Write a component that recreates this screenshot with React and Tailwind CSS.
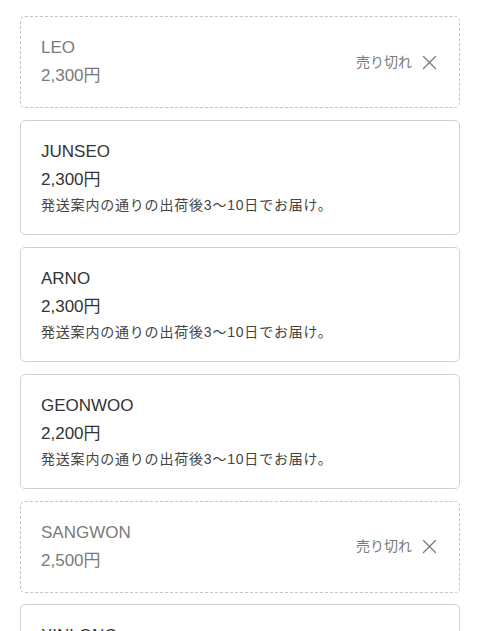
const items = [
    { name: "LEO", price: "2,300円", soldOut: true },
    { name: "JUNSEO", price: "2,300円" },
    { name: "ARNO", price: "2,300円" },
    { name: "GEONWOO", price: "2,200円" },
    { name: "SANGWON", price: "2,500円", soldOut: true },
    { name: "XINLONG", price: "2,300円" },
];

const note = "発送案内の通りの出荷後3〜10日でお届け。";

const CloseIcon = () => (
    <svg width="15" height="15" viewBox="0 0 15 15" fill="none" stroke="currentColor" strokeWidth="1.3" strokeLinecap="round">
        <path d="M1.5 1.5 L13.5 13.5 M13.5 1.5 L1.5 13.5" />
    </svg>
);

const ItemCard = ({ item }) => {
    if (item.soldOut) {
        return (
            <div className="flex items-center rounded-[5px] border border-dashed border-[#c4c4c4] bg-white pl-5 pr-[22px] pt-[17px] pb-[17px] text-[#7a7a7a]">
                <div className="flex-1">
                    <div className="text-[17px] leading-[28px]">{item.name}</div>
                    <div className="text-[17px] leading-[28px]">{item.price}</div>
                </div>
                <div className="flex items-center gap-[10px] text-[14px] text-[#7a7a7a]">
                    <span>売り切れ</span>
                    <CloseIcon />
                </div>
            </div>
        );
    }
    return (
        <div className="rounded-[5px] border border-[#d2d2d2] bg-white px-5 pt-[17px] pb-[17px] text-[#333333]">
            <div className="text-[17px] leading-[28px]">{item.name}</div>
            <div className="text-[17px] leading-[28px]">{item.price}</div>
            <div className="text-[14px] leading-[23.5px] tracking-[0.8px] text-[#444444]">{note}</div>
        </div>
    );
};

export default function App() {
    return (
        <div
            className="h-[631px] overflow-hidden bg-white px-5 pt-4"
            style={{ fontFamily: '"Liberation Sans", "Noto Sans CJK JP", sans-serif' }}
        >
            <div className="flex flex-col gap-[11.5px]">
                {items.map((item) => (
                    <ItemCard key={item.name} item={item} />
                ))}
            </div>
        </div>
    );
}
